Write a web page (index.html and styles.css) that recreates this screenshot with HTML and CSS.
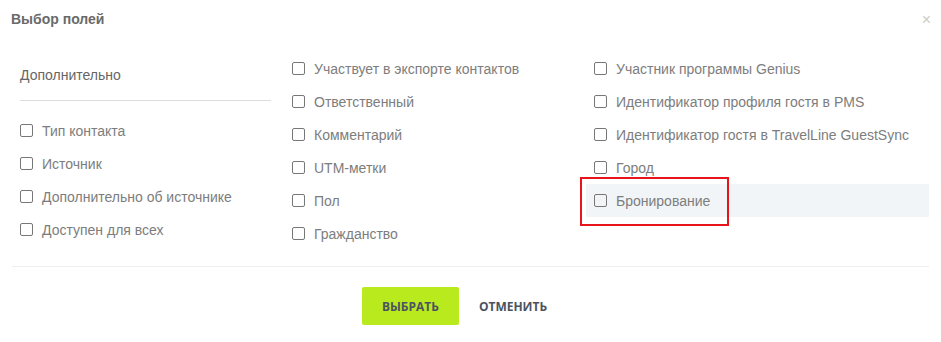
FILE: index.html
```html
<!DOCTYPE html>
<html lang="ru">
<head>
    <meta charset="UTF-8">
    <title>Выбор полей</title>
    <link rel="stylesheet" href="styles.css">
</head>
<body>
    <div class="modal">
        <div class="modal-header">
            <span class="modal-title">Выбор полей</span>
            <span class="modal-close">&times;</span>
        </div>

        <div class="fields">
            <div class="field-col field-col-first">
                <div class="group-title">Дополнительно</div>
                <label class="field"><span class="box"></span>Тип контакта</label>
                <label class="field"><span class="box"></span>Источник</label>
                <label class="field"><span class="box"></span>Дополнительно об источнике</label>
                <label class="field"><span class="box"></span>Доступен для всех</label>
            </div>
            <div class="field-col field-col-second">
                <label class="field"><span class="box"></span>Участвует в экспорте контактов</label>
                <label class="field"><span class="box"></span>Ответственный</label>
                <label class="field"><span class="box"></span>Комментарий</label>
                <label class="field"><span class="box"></span>UTM-метки</label>
                <label class="field"><span class="box"></span>Пол</label>
                <label class="field"><span class="box"></span>Гражданство</label>
            </div>
            <div class="field-col">
                <label class="field"><span class="box"></span>Участник программы Genius</label>
                <label class="field"><span class="box"></span>Идентификатор профиля гостя в PMS</label>
                <label class="field"><span class="box"></span>Идентификатор гостя в TravelLine GuestSync</label>
                <label class="field"><span class="box"></span>Город</label>
                <label class="field field-hover"><span class="box"></span>Бронирование<span class="mark"></span></label>
            </div>
        </div>

        <div class="modal-footer">
            <button class="btn btn-primary">Выбрать</button>
            <button class="btn btn-link">Отменить</button>
        </div>
    </div>
</body>
</html>
```

FILE: styles.css
```css
body {
    margin: 0;
    background-color: #fff;
    font-family: "Liberation Sans", Arial, sans-serif;
}
.modal {
    width: 941px;
    height: 342px;
    box-sizing: border-box;
    padding: 0 12px;
}
.modal-header {
    display: flex;
    justify-content: space-between;
    align-items: center;
    height: 38px;
    padding-bottom: 14px;
}
.modal-title {
    font-size: 14px;
    font-weight: bold;
    color: #6a6a6a;
    margin-left: -1px;
}
.modal-close {
    font-size: 16px;
    color: #ccc;
    margin-right: -2px;
    padding-top: 2px;
}
.fields {
    display: grid;
    grid-template-columns: 272px 302px 1fr;
    padding-bottom: 16px;
    border-bottom: 1px solid #eee;
}
.group-title {
    margin: 0 13px 13px 8px;
    padding: 13px 0 15px;
    line-height: 20px;
    font-size: 14px;
    color: #666;
    border-bottom: 1px solid #ddd;
}
.field {
    position: relative;
    display: flex;
    align-items: center;
    height: 33px;
    padding: 0 8px;
    font-size: 14px;
    color: #7d7d7d;
}
.field-hover {
    background-color: #f1f5f8;
}
.box {
    width: 11px;
    height: 11px;
    border: 1px solid #777;
    border-radius: 2px;
    margin-right: 9px;
    flex-shrink: 0;
}
.mark {
    position: absolute;
    left: -6px;
    top: -7px;
    width: 145px;
    height: 45px;
    border: 2px solid #e8141c;
}
.modal-footer {
    display: flex;
    justify-content: center;
    align-items: center;
    gap: 20px;
    padding: 20px 32px 0 0;
}
.btn {
    font-family: "Open Sans", sans-serif;
    font-size: 12px;
    font-weight: 700;
    text-transform: uppercase;
    color: #4b5262;
    border: none;
    height: 38px;
    cursor: pointer;
}
.btn-primary {
    width: 97px;
    background-color: #b9ea1e;
    border-radius: 2px;
}
.btn-link {
    background: none;
    padding: 0;
}
```
